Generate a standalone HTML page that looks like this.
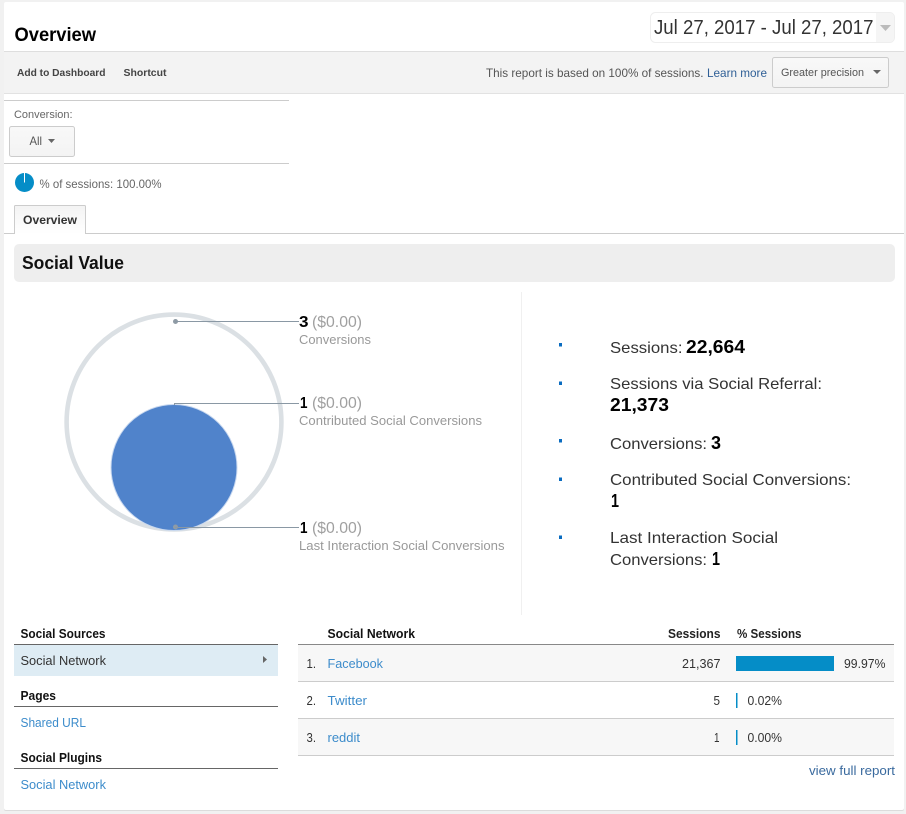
<!DOCTYPE html>
<html><head><meta charset="utf-8"><title>Overview</title>
<style>
html,body{margin:0;padding:0;background:#f1f1f1;width:906px;height:814px;overflow:hidden}
svg{display:block}
text{font-family:"Liberation Sans",Arial,sans-serif;white-space:pre}
.b{font-weight:bold}
.lnk{fill:#3d8ccb}
.blk{fill:#333}
</style></head><body>
<svg xmlns="http://www.w3.org/2000/svg" width="906" height="814" viewBox="0 0 906 814">
<defs>
<linearGradient id="btn" x1="0" y1="0" x2="0" y2="1"><stop offset="0" stop-color="#f8f8f8"/><stop offset="0.5" stop-color="#f6f6f6"/><stop offset="1" stop-color="#f3f3f3"/></linearGradient>
<linearGradient id="tab" x1="0" y1="0" x2="0" y2="1"><stop offset="0" stop-color="#f3f3f3"/><stop offset="1" stop-color="#fff"/></linearGradient>
</defs>
<rect x="4" y="3" width="900" height="808" rx="2" fill="#dcdcdc"/>
<rect x="4" y="2" width="900" height="808" rx="2" fill="#fff"/>

<text x="14.5" y="41" font-size="19" class="b" fill="#000" textLength="81.5" lengthAdjust="spacingAndGlyphs">Overview</text>

<rect x="650.5" y="12.5" width="244" height="30" rx="5" fill="#fff" stroke="#eee"/>
<path d="M876 13h14a4 4 0 0 1 4 4v21a4 4 0 0 1-4 4h-14z" fill="#f5f5f5"/>
<text x="654" y="34" font-size="20" fill="#333" textLength="219.5" lengthAdjust="spacingAndGlyphs">Jul 27, 2017 - Jul 27, 2017</text>
<path d="M880 25h11l-5.500 6z" fill="#bbb"/>

<rect x="4" y="51" width="900" height="43" fill="#f3f3f3"/>
<rect x="4" y="51" width="900" height="1" fill="#dedede"/>
<rect x="4" y="93" width="900" height="1" fill="#e2e2e2"/>
<text x="17" y="76" font-size="10.500" class="b" fill="#444" textLength="88.500" lengthAdjust="spacingAndGlyphs">Add to Dashboard</text>
<text x="123.500" y="76" font-size="10.500" class="b" fill="#444" textLength="43" lengthAdjust="spacingAndGlyphs">Shortcut</text>
<text x="486" y="77" font-size="12" fill="#555" textLength="217.500" lengthAdjust="spacingAndGlyphs">This report is based on 100% of sessions.</text>
<text x="707" y="77" font-size="12" fill="#2f5f96" textLength="60" lengthAdjust="spacingAndGlyphs">Learn more</text>
<rect x="772.500" y="57.500" width="116" height="30" rx="2" fill="url(#btn)" stroke="#ccc"/>
<text x="781" y="76" font-size="11" fill="#555" textLength="83" lengthAdjust="spacingAndGlyphs">Greater precision</text>
<path d="M873 70h8l-4 4z" fill="#666"/>

<rect x="4" y="100" width="285" height="1" fill="#ccc"/>
<text x="14" y="118" font-size="11" fill="#666" textLength="58.500" lengthAdjust="spacingAndGlyphs">Conversion:</text>
<rect x="9.500" y="126.500" width="65" height="30" rx="2" fill="url(#btn)" stroke="#ccc"/>
<text x="29.500" y="145" font-size="12" fill="#555" textLength="12.500" lengthAdjust="spacingAndGlyphs">All</text>
<path d="M48 139h7l-3.500 4z" fill="#666"/>
<rect x="4" y="163" width="285" height="1" fill="#ccc"/>
<circle cx="24.500" cy="182.500" r="9.500" fill="#058dc7"/>
<rect x="24" y="173" width="1" height="9.500" fill="#fff"/>
<text x="39.500" y="188" font-size="12" fill="#666" textLength="122" lengthAdjust="spacingAndGlyphs">% of sessions: 100.00%</text>

<rect x="4" y="233" width="900" height="1" fill="#ccc"/>
<path d="M14.500 234V206.500a1 1 0 0 1 1-1H84.500a1 1 0 0 1 1 1V234" fill="url(#tab)" stroke="#ccc"/>
<text x="23" y="224" font-size="12" class="b" fill="#333" textLength="54" lengthAdjust="spacingAndGlyphs">Overview</text>

<rect x="14" y="244" width="881" height="38" rx="5" fill="#eee"/>
<text x="22" y="269" font-size="18" class="b" fill="#111" textLength="102" lengthAdjust="spacingAndGlyphs">Social Value</text>

<rect x="521" y="292" width="1" height="323" fill="#f0f0f0"/>

<circle cx="174" cy="422" r="107.400" fill="#fff" stroke="#dbe0e4" stroke-width="4.600"/>
<circle cx="174" cy="467.500" r="63" fill="#5083cb" stroke="#c8d8ef" stroke-width="1"/>
<circle cx="175.500" cy="321.500" r="2.500" fill="#8f9ba5"/>
<rect x="175" y="321" width="124" height="1" fill="#8a98a4"/>
<rect x="174" y="403" width="125" height="1" fill="#8a98a4"/>
<rect x="174" y="403" width="1" height="2" fill="#8a98a4"/>
<circle cx="175.500" cy="527" r="2.500" fill="#8f9ba5"/>
<rect x="175" y="527" width="124" height="1" fill="#8a98a4"/>

<text x="299" y="327" font-size="16" class="b" fill="#000" textLength="9.500" lengthAdjust="spacingAndGlyphs">3</text>
<text x="312" y="327" font-size="16" fill="#a0a0a0" textLength="50" lengthAdjust="spacingAndGlyphs">($0.00)</text>
<text x="299" y="344" font-size="12.500" fill="#999" textLength="72" lengthAdjust="spacingAndGlyphs">Conversions</text>
<text x="300" y="408" font-size="16" class="b" fill="#000" textLength="7.500" lengthAdjust="spacingAndGlyphs">1</text>
<text x="312" y="408" font-size="16" fill="#a0a0a0" textLength="50" lengthAdjust="spacingAndGlyphs">($0.00)</text>
<text x="299" y="425" font-size="12.500" fill="#999" textLength="183" lengthAdjust="spacingAndGlyphs">Contributed Social Conversions</text>
<text x="300" y="533" font-size="16" class="b" fill="#000" textLength="7.500" lengthAdjust="spacingAndGlyphs">1</text>
<text x="312" y="533" font-size="16" fill="#a0a0a0" textLength="50" lengthAdjust="spacingAndGlyphs">($0.00)</text>
<text x="299" y="550" font-size="12.500" fill="#999" textLength="205.500" lengthAdjust="spacingAndGlyphs">Last Interaction Social Conversions</text>

<g fill="#0a6cc0">
<rect x="559" y="343" width="3" height="3.500"/>
<rect x="559" y="381.500" width="3" height="3.500"/>
<rect x="559" y="439" width="3" height="3.500"/>
<rect x="559" y="477.500" width="3" height="3.500"/>
<rect x="559" y="535.500" width="3" height="3.500"/>
</g>
<g font-size="16" fill="#333">
<text x="610" y="353" textLength="72.500" lengthAdjust="spacingAndGlyphs">Sessions:</text>
<text x="610" y="389" textLength="212" lengthAdjust="spacingAndGlyphs">Sessions via Social Referral:</text>
<text x="610" y="449" textLength="97" lengthAdjust="spacingAndGlyphs">Conversions:</text>
<text x="610" y="485" textLength="241" lengthAdjust="spacingAndGlyphs">Contributed Social Conversions:</text>
<text x="610" y="543" textLength="168" lengthAdjust="spacingAndGlyphs">Last Interaction Social</text>
<text x="610" y="565" textLength="97" lengthAdjust="spacingAndGlyphs">Conversions:</text>
</g>
<g font-size="18" class="b" fill="#000">
<text x="686" y="353" textLength="59" lengthAdjust="spacingAndGlyphs">22,664</text>
<text x="610" y="411" textLength="59" lengthAdjust="spacingAndGlyphs">21,373</text>
<text x="711" y="449" textLength="10" lengthAdjust="spacingAndGlyphs">3</text>
<text x="611" y="507" textLength="8" lengthAdjust="spacingAndGlyphs">1</text>
<text x="712" y="565" textLength="8" lengthAdjust="spacingAndGlyphs">1</text>
</g>

<text x="20.500" y="638" font-size="12.500" class="b" fill="#111" textLength="85" lengthAdjust="spacingAndGlyphs">Social Sources</text>
<rect x="14" y="645" width="264" height="31" fill="#deecf4"/>
<rect x="14" y="644" width="264" height="1" fill="#666"/>
<text x="20.500" y="665" font-size="12.500" class="blk" textLength="85.500" lengthAdjust="spacingAndGlyphs">Social Network</text>
<path d="M263 656l4 3.500-4 3.500z" fill="#666"/>
<text x="20.500" y="700" font-size="12.500" class="b" fill="#111" textLength="35.500" lengthAdjust="spacingAndGlyphs">Pages</text>
<rect x="14" y="706" width="264" height="1" fill="#666"/>
<text x="20.500" y="727" font-size="12.500" class="lnk" textLength="65.500" lengthAdjust="spacingAndGlyphs">Shared URL</text>
<text x="20.500" y="762" font-size="12.500" class="b" fill="#111" textLength="81.500" lengthAdjust="spacingAndGlyphs">Social Plugins</text>
<rect x="14" y="768" width="264" height="1" fill="#666"/>
<text x="20.500" y="789" font-size="12.500" class="lnk" textLength="85.500" lengthAdjust="spacingAndGlyphs">Social Network</text>

<rect x="298" y="645" width="596" height="36" fill="#f7f7f7"/>
<rect x="298" y="719" width="596" height="36" fill="#f7f7f7"/>
<rect x="298" y="644" width="596" height="1" fill="#888"/>
<rect x="298" y="681" width="596" height="1" fill="#ccc"/>
<rect x="298" y="718" width="596" height="1" fill="#ccc"/>
<rect x="298" y="755" width="596" height="1" fill="#ccc"/>

<text x="327.500" y="638" font-size="12.500" class="b" fill="#111" textLength="87.500" lengthAdjust="spacingAndGlyphs">Social Network</text>
<text x="668" y="638" font-size="12.500" class="b" fill="#222" textLength="52.500" lengthAdjust="spacingAndGlyphs">Sessions</text>
<text x="737" y="638" font-size="12.500" class="b" fill="#222" textLength="64.500" lengthAdjust="spacingAndGlyphs">% Sessions</text>

<g font-size="12.500" class="blk">
<text x="306.500" y="668" textLength="9.500" lengthAdjust="spacingAndGlyphs">1.</text>
<text x="306.500" y="705" textLength="9.500" lengthAdjust="spacingAndGlyphs">2.</text>
<text x="306.500" y="742" textLength="9.500" lengthAdjust="spacingAndGlyphs">3.</text>
<text x="682" y="668" textLength="38.500" lengthAdjust="spacingAndGlyphs">21,367</text>
<text x="713.500" y="705" textLength="6.500" lengthAdjust="spacingAndGlyphs">5</text>
<text x="714" y="742" textLength="5.500" lengthAdjust="spacingAndGlyphs">1</text>
<text x="844" y="668" textLength="41.500" lengthAdjust="spacingAndGlyphs">99.97%</text>
<text x="747.500" y="705" textLength="34.500" lengthAdjust="spacingAndGlyphs">0.02%</text>
<text x="747.500" y="742" textLength="34.500" lengthAdjust="spacingAndGlyphs">0.00%</text>
</g>
<g font-size="12.500" class="lnk">
<text x="327.500" y="668" textLength="55.500" lengthAdjust="spacingAndGlyphs">Facebook</text>
<text x="327.500" y="705" textLength="39.500" lengthAdjust="spacingAndGlyphs">Twitter</text>
<text x="327.500" y="742" textLength="32.500" lengthAdjust="spacingAndGlyphs">reddit</text>
</g>
<rect x="736" y="656" width="98" height="15" fill="#058dc7"/>
<rect x="736" y="693" width="1.500" height="15" fill="#058dc7"/>
<rect x="736" y="730" width="1.500" height="15" fill="#058dc7"/>
<text x="809" y="775" font-size="12.500" fill="#3a6a9e" textLength="86" lengthAdjust="spacingAndGlyphs">view full report</text>
</svg>
</body></html>
